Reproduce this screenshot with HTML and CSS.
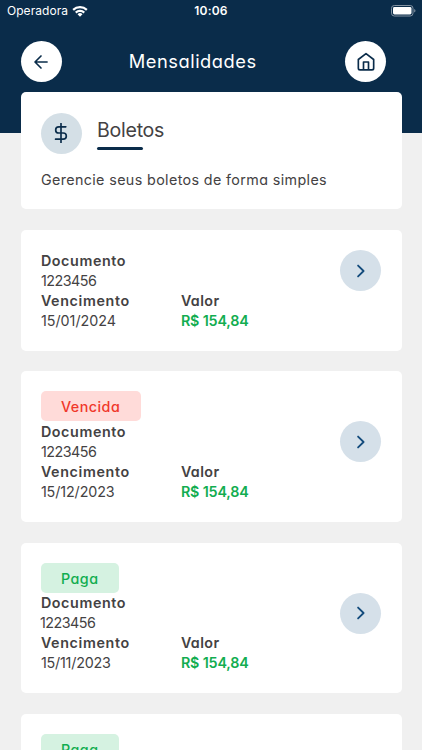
FILE: index.html
```html
<!DOCTYPE html>
<html lang="pt-BR">
<head>
<meta charset="utf-8">
<title>Mensalidades</title>
<link rel="stylesheet" href="styles.css">
</head>
<body>
<svg width="0" height="0" class="defs">
  <symbol id="chevron" viewBox="0 0 24 24"><path d="M8.5 5.5l6.6 6.5-6.6 6.5"/></symbol>
</svg>
<header class="top">
  <div class="status">
    <div class="carrier"><span>Operadora</span>
      <svg class="wifi" viewBox="0 0 16 12"><path d="M.4 4.1a11 11 0 0 1 15.2 0l-1.5 1.6a8.8 8.8 0 0 0-12.2 0zM3 6.8a7.2 7.2 0 0 1 10 0l-1.5 1.6a5 5 0 0 0-7 0zM5.5 9.3a3.6 3.6 0 0 1 5 0L8 11.8z"/></svg>
    </div>
    <time class="clock">10:06</time>
    <svg class="battery" viewBox="0 0 25 12"><rect x=".5" y=".5" width="21.5" height="10.5" rx="2.8" fill="none" stroke="#8292a2"/><rect x="2" y="2" width="18.5" height="7.5" rx="1.4" fill="#fff"/><path d="M23.2 4.1v3.4q1.3-.5 1.3-1.7t-1.3-1.7z" fill="#8292a2"/></svg>
  </div>
  <nav class="bar">
    <button class="circle white" aria-label="Voltar"><svg class="icon" viewBox="0 0 24 24"><path d="M19.3 12H5M12 4.8L4.8 12l7.2 7.2"/></svg></button>
    <h1>Mensalidades</h1>
    <button class="circle white" aria-label="Início"><svg class="icon home" viewBox="0 0 24 24"><path d="M2.8 9L12 2l9.2 7v10.5a2 2 0 0 1-2 2H4.8a2 2 0 0 1-2-2zM9 21.5V12h6v9.5"/></svg></button>
  </nav>
</header>
<main class="list">
  <section class="card intro">
    <div class="heading">
      <span class="circle dollar"><svg class="icon" viewBox="0 0 24 24"><path d="M12 .5v23M17.8 4.6H9.3a3.7 3.7 0 0 0 0 7.4h5.4a3.7 3.7 0 0 1 0 7.4H5.5"/></svg></span>
      <h2>Boletos</h2>
    </div>
    <p class="lead">Gerencie seus boletos de forma simples</p>
  </section>
  <article class="card bill">
    <div class="info">
      <div class="label doc">Documento</div><div class="value number">1223456</div>
      <div class="cols"><div><div class="label due">Vencimento</div><div class="value">15/01/2024</div></div>
      <div><div class="label amount">Valor</div><div class="money">R$ 154,84</div></div></div>
    </div>
    <button class="circle go" aria-label="Abrir"><svg class="icon"><use href="#chevron"/></svg></button>
  </article>
  <article class="card bill tagged">
    <div class="info">
      <span class="tag late">Vencida</span>
      <div class="label doc">Documento</div><div class="value number">1223456</div>
      <div class="cols"><div><div class="label due">Vencimento</div><div class="value dec">15/12/2023</div></div>
      <div><div class="label amount">Valor</div><div class="money">R$ 154,84</div></div></div>
    </div>
    <button class="circle go" aria-label="Abrir"><svg class="icon"><use href="#chevron"/></svg></button>
  </article>
  <article class="card bill tagged">
    <div class="info">
      <span class="tag paid">Paga</span>
      <div class="label doc">Documento</div><div class="value number shifted">1223456</div>
      <div class="cols"><div><div class="label due">Vencimento</div><div class="value nov">15/11/2023</div></div>
      <div><div class="label amount">Valor</div><div class="money">R$ 154,84</div></div></div>
    </div>
    <button class="circle go" aria-label="Abrir"><svg class="icon"><use href="#chevron"/></svg></button>
  </article>
  <article class="card bill tagged">
    <div class="info">
      <span class="tag paid">Paga</span>
    </div>
  </article>
</main>
</body>
</html>
```
FILE: styles.css
```css
* { box-sizing: border-box; }
body {
  margin: 0;
  height: 750px;
  overflow: hidden;
  background: #f0f0f0;
  color: #444243;
  font-family: Inter, "Liberation Sans", sans-serif;
  font-feature-settings: "cv11";
  font-size: 14.3px;
  line-height: 20px;
}
h1, h2, p { margin: 0; font-weight: 400; }
button { border: 0; padding: 0; }
.defs { display: none; }
.top { height: 133px; background: #0a2c4a; color: #fff; }
.status {
  height: 22px;
  display: grid;
  grid-template-columns: 1fr auto 1fr;
  align-items: center;
  padding: 0 6px 0 7px;
  font-feature-settings: normal;
  font-size: 12px;
}
.carrier { display: flex; align-items: center; gap: 5px; letter-spacing: .05px; }
.wifi { width: 16px; height: 12px; margin-left: -1px; fill: #fff; }
.clock { font-weight: 600; letter-spacing: .2px; margin-right: 1px; }
.battery { width: 25px; height: 12px; justify-self: end; }
.bar {
  display: flex;
  align-items: center;
  padding: 19px 36px 0 20.5px;
}
h1 { flex: 1; padding-left: 67.3px; font-size: 18.3px; letter-spacing: .52px; line-height: 18px; padding-bottom: 1px; }
.circle {
  width: 41px;
  height: 41px;
  flex: none;
  border-radius: 50%;
  display: flex;
  align-items: center;
  justify-content: center;
  background: #d5e0e9;
  color: #0a2c4a;
}
.white { background: #fff; }
.icon {
  width: 20px;
  height: 20px;
  fill: none;
  stroke: currentColor;
  stroke-width: 2;
  stroke-linecap: round;
  stroke-linejoin: round;
}
.list {
  display: flex;
  flex-direction: column;
  gap: 20.5px;
  padding: 0 20.5px;
  margin-top: -40.6px;
}
.card { flex: none; background: #fff; border-radius: 5px; padding: 20.4px; }
.intro { height: 117px; }
.heading { display: flex; gap: 15.5px; }
.dollar { background: #d4dfe6; }
h2 {
  height: 37px;
  padding-top: 6px;
  font-size: 19.6px;
  line-height: 22px;
  font-feature-settings: normal;
  letter-spacing: -.25px;
  text-indent: -.5px;
}
h2::after {
  content: "";
  display: block;
  width: 46px;
  height: 3px;
  margin-top: 6px;
  border-radius: 2px;
  background: #0a2c4a;
}
.lead { margin-top: 16.3px; white-space: nowrap; letter-spacing: .38px; }
.bill { height: 120.8px; display: flex; justify-content: space-between; align-items: flex-start; }
.bill .go { color: #134b7c; }
.go .icon { stroke-width: 2.2; }
.tagged { height: 150.8px; }
.tagged .go { margin-top: 29.7px; }
.info { padding-top: .3px; }
.tagged .info { padding-top: 0; margin-top: -.4px; }
.tagged .doc { margin-top: .9px; }
.label { font-weight: 600; }
.doc { letter-spacing: .6px; }
.due { letter-spacing: .65px; }
.amount { letter-spacing: .4px; }
.number { letter-spacing: -.5px; }
.dec { letter-spacing: -.1px; }
.nov { letter-spacing: -.2px; }
.cols { display: grid; grid-template-columns: 140px auto; }
.money { font-weight: 600; letter-spacing: -.15px; color: #12ad50; }
.tag {
  display: block;
  height: 30px;
  padding: 0 20px;
  border-radius: 5px;
  line-height: 31px;
  font-weight: 500;
  letter-spacing: .5px;
}
.late { width: 100.5px; background: #ffdbd9; color: #f0382b; }
.paid { width: 78.5px; background: #d5f2e1; color: #12ad50; }
.shifted { margin-left: -1px; }
```
